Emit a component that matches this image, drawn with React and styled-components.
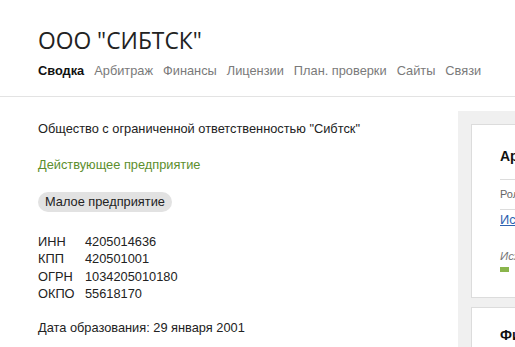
import styled, { createGlobalStyle } from "styled-components";

const GlobalStyle = createGlobalStyle`
  html, body {
    margin: 0;
    padding: 0;
    background: #fff;
    overflow: hidden;
  }
  body {
    font-family: "Liberation Sans", Arial, sans-serif;
    font-size: 12.8px;
    color: #222;
  }
`;

const Page = styled.div`
  width: 515px;
  overflow: hidden;
`;

const Header = styled.header`
  padding: 28px 38px 17px;
  border-bottom: 1px solid #e3e3e3;
`;

const Title = styled.h1`
  margin: 0;
  font-family: "Open Sans", "Liberation Sans", sans-serif;
  font-size: 22.8px;
  font-weight: 400;
  line-height: 26px;
  color: #222;
  white-space: nowrap;
`;

const Nav = styled.nav`
  display: flex;
  gap: 10px;
  margin-top: 9px;
  line-height: 16px;
  white-space: nowrap;
`;

const NavItem = styled.a`
  color: ${(p) => (p.$active ? "#111" : "#7a7a7a")};
  font-weight: ${(p) => (p.$active ? 700 : 400)};
  text-decoration: none;
`;

const Main = styled.div`
  display: flex;
  padding-top: 14px;
`;

const Content = styled.div`
  flex: 0 0 420px;
  display: flex;
  flex-direction: column;
  align-items: flex-start;
  padding: 9px 0 0 38px;
  line-height: 17.4px;
`;

const Text = styled.p`
  margin: 0 0 ${(p) => p.$gap || 18}px;
  color: ${(p) => (p.$green ? "#5c8e2d" : "#222")};
  white-space: nowrap;
`;

const Badge = styled.span`
  height: 20px;
  line-height: 20px;
  padding: 0 7px;
  border-radius: 10px;
  background: #e2e2e2;
  color: #222;
  margin-bottom: 21px;
`;

const Codes = styled.div`
  display: grid;
  grid-template-columns: 47px auto;
  margin-bottom: 17px;
`;

const Sidebar = styled.aside`
  flex: 0 0 300px;
  background: #f0f0f0;
  padding: 13px 0 0 13px;
  display: flex;
  flex-direction: column;
  gap: 9px;
`;

const Card = styled.div`
  background: #fff;
  border: 1px solid #dcdcdc;
  padding: ${(p) => p.$top || 22}px 20px 25px 28px;
`;

const CardTitle = styled.h3`
  margin: 0 0 14px;
  font-size: 14px;
  font-weight: 700;
  line-height: 18px;
  color: #111;
`;

const CardRow = styled.div`
  border-top: 1px solid #dcdcdc;
  border-bottom: 1px solid #dcdcdc;
  padding: 6px 0 7px;
  font-size: 11px;
  line-height: 16px;
  color: #666;
`;

const CardLink = styled.a`
  display: block;
  margin-top: 1px;
  line-height: 18px;
  color: #2e62b0;
  text-decoration: underline;
`;

const SmallNote = styled.div`
  margin-top: 19px;
  font-size: 11.5px;
  line-height: 16px;
  font-style: italic;
  color: #777;
`;

const Bar = styled.div`
  margin-top: 3px;
  height: 5px;
  background: #8ab54c;
`;

const codes = [
  ["ИНН", "4205014636"],
  ["КПП", "420501001"],
  ["ОГРН", "1034205010180"],
  ["ОКПО", "55618170"],
];

const tabs = ["Сводка", "Арбитраж", "Финансы", "Лицензии", "План. проверки", "Сайты", "Связи"];

export default function App() {
  return (
    <Page>
      <GlobalStyle />
      <Header>
        <Title>ООО "СИБТСК"</Title>
        <Nav>
          {tabs.map((t, i) => (
            <NavItem key={t} $active={i === 0}>
              {t}
            </NavItem>
          ))}
        </Nav>
      </Header>
      <Main>
        <Content>
          <Text $gap={19}>Общество с ограниченной ответственностью "Сибтск"</Text>
          <Text $green>Действующее предприятие</Text>
          <Badge>Малое предприятие</Badge>
          <Codes>
            {codes.map(([k, v]) => [<span key={k}>{k}</span>, <span key={v}>{v}</span>])}
          </Codes>
          <Text>Дата образования: 29 января 2001</Text>
        </Content>
        <Sidebar>
          <Card>
            <CardTitle>Арбитраж</CardTitle>
            <CardRow>Роль в делах</CardRow>
            <CardLink>Истец</CardLink>
            <SmallNote>Исход дел</SmallNote>
            <Bar style={{ width: 9 }} />
          </Card>
          <Card $top={18}>
            <CardTitle>Финансы</CardTitle>
          </Card>
        </Sidebar>
      </Main>
    </Page>
  );
}
